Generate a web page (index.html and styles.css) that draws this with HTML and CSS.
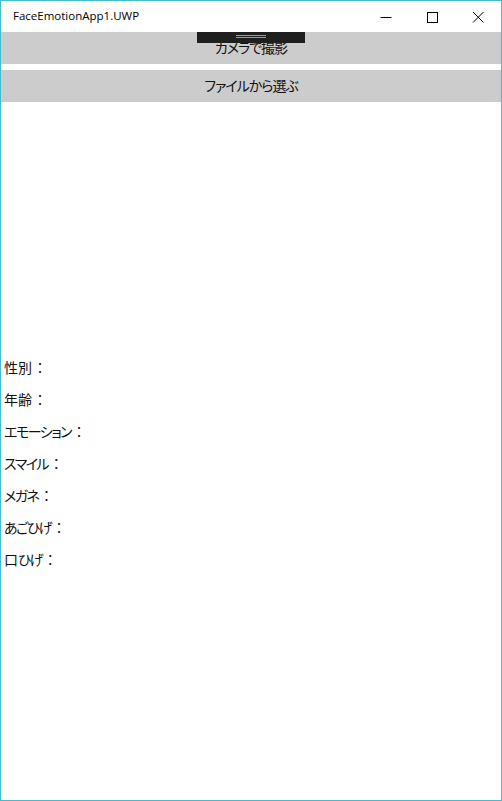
FILE: index.html
```html
<!DOCTYPE html>
<html lang="ja">
<head>
<meta charset="utf-8">
<title>FaceEmotionApp1.UWP</title>
<link rel="stylesheet" href="styles.css">
</head>
<body>
<div class="window">
  <div class="titlebar">
    <span class="title">FaceEmotionApp1.UWP</span>
    <div class="caption-buttons">
      <span class="cap-btn">
        <svg width="12" height="12" viewBox="0 0 12 12"><path d="M0.5 6.5H11.5" stroke="#000" stroke-width="1" fill="none"/></svg>
      </span>
      <span class="cap-btn">
        <svg width="12" height="12" viewBox="0 0 12 12"><rect x="1.5" y="1.5" width="10" height="10" stroke="#000" stroke-width="1" fill="none"/></svg>
      </span>
      <span class="cap-btn">
        <svg width="12" height="12" viewBox="0 0 12 12"><path d="M1 1L11.5 11.5M11.5 1L1 11.5" stroke="#000" stroke-width="1" fill="none"/></svg>
      </span>
    </div>
  </div>
  <div class="content">
    <div class="buttons">
      <div class="btn">カメラで撮影</div>
      <div class="btn">ファイルから選ぶ</div>
      <div class="grip"><span class="grip-lines"></span></div>
    </div>
    <div class="image-area"></div>
    <div class="results">
      <div class="row">性別<span class="colon">：</span></div>
      <div class="row">年齢<span class="colon">：</span></div>
      <div class="row"><span class="kana">エモーション</span><span class="colon">：</span></div>
      <div class="row"><span class="kana">スマイル</span><span class="colon">：</span></div>
      <div class="row"><span class="kana">メガネ</span><span class="colon">：</span></div>
      <div class="row"><span class="kana">あごひげ</span><span class="colon">：</span></div>
      <div class="row">口<span class="kana">ひげ</span><span class="colon">：</span></div>
    </div>
  </div>
</div>
</body>
</html>
```

FILE: styles.css
```css
html, body {
  margin: 0;
  padding: 0;
  background: #ffffff;
}

.window {
  box-sizing: border-box;
  width: 502px;
  height: 801px;
  border: 1px solid #45bcce;
  background: #ffffff;
  display: flex;
  flex-direction: column;
  font-family: "Noto Sans CJK JP", "Noto Sans", sans-serif;
  color: #000;
}

.titlebar {
  height: 31px;
  display: flex;
  align-items: center;
  justify-content: space-between;
  flex-shrink: 0;
}

.title {
  font-family: "Open Sans", "Noto Sans", sans-serif;
  font-size: 11.5px;
  padding-left: 12px;
  padding-bottom: 2px;
  color: #000;
}

.caption-buttons {
  display: flex;
  height: 100%;
}

.cap-btn {
  width: 46px;
  display: flex;
  align-items: center;
  justify-content: center;
}

.content {
  display: flex;
  flex-direction: column;
  flex: 1;
}

.buttons {
  position: relative;
  display: flex;
  flex-direction: column;
  gap: 6px;
}

.btn {
  height: 32px;
  background: #cccccc;
  display: flex;
  align-items: center;
  justify-content: center;
  font-size: 14px;
  font-feature-settings: "palt";
  letter-spacing: -1px;
  color: #111;
  padding-bottom: 2px;
  box-sizing: border-box;
}

.grip {
  position: absolute;
  left: 196px;
  top: 0;
  width: 108px;
  height: 11px;
  background: #1f1f1f;
  display: flex;
  justify-content: center;
}

.grip-lines {
  margin-top: 3px;
  width: 30px;
  height: 3px;
  border-top: 1px solid #9a9a9a;
  border-bottom: 1px solid #9a9a9a;
  box-sizing: border-box;
}

.image-area {
  height: 255px;
}

.results {
  display: flex;
  flex-direction: column;
  gap: 12px;
  padding-left: 3px;
}

.row {
  font-size: 14px;
  line-height: 20px;
  height: 20px;
  color: #111;
}

.kana {
  font-feature-settings: "palt";
  letter-spacing: -1.5px;
}

.colon {
  display: inline-block;
  width: 14px;
  text-align: center;
  margin-left: 1px;
}
```
